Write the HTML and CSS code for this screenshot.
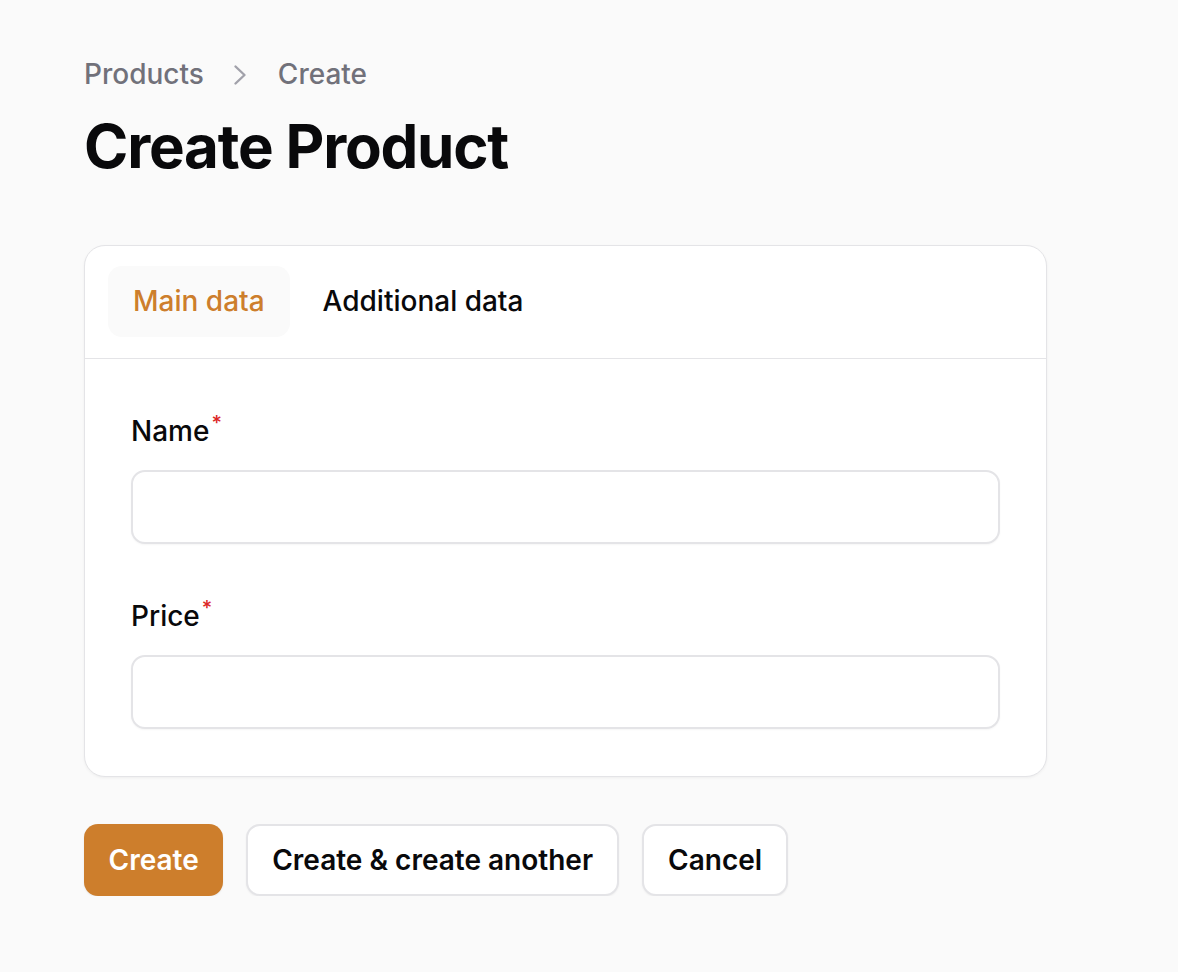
FILE: index.html
```html
<!DOCTYPE html>
<html lang="en">
<head>
<meta charset="utf-8">
<title>Create Product</title>
<link rel="stylesheet" href="styles.css">
</head>
<body>
<main class="page">
  <nav class="breadcrumbs">
    <span class="crumb">Products</span>
    <svg class="chev" width="14" height="22" viewBox="0 0 14 22" fill="none" stroke="currentColor" stroke-width="2.4" stroke-linecap="round" stroke-linejoin="round"><path d="M2.5 2.5l9 8.5-9 8.5"/></svg>
    <span class="crumb">Create</span>
  </nav>
  <h1 class="title">Create Product</h1>

  <section class="card">
    <div class="tabs">
      <button class="tab active">Main data</button>
      <button class="tab">Additional data</button>
    </div>
    <div class="panel">
      <div class="field">
        <label class="label">Name<sup class="req">*</sup></label>
        <input class="input" type="text">
      </div>
      <div class="field">
        <label class="label">Price<sup class="req">*</sup></label>
        <input class="input" type="text">
      </div>
    </div>
  </section>

  <div class="actions">
    <button class="btn primary">Create</button>
    <button class="btn outline">Create &amp; create another</button>
    <button class="btn outline">Cancel</button>
  </div>
</main>
</body>
</html>
```

FILE: styles.css
```css
html, body {
  margin: 0;
  background: #fafafa;
  font-family: Inter, "Noto Sans", sans-serif;
  color: #09090b;
}
.page {
  padding: 57px 0 0 84px;
  width: 963px;
}
.breadcrumbs {
  display: flex;
  align-items: center;
  height: 35px;
  font-size: 28px;
  line-height: 35px;
  font-weight: 500;
  color: #71717a;
}
.chev {
  color: #a1a1aa;
  margin: 0 31px 0 29px;
}
.title {
  margin: 19px 0 0;
  font-size: 60px;
  line-height: 70px;
  font-weight: 700;
  letter-spacing: -0.02em;
  color: #09090b;
}
.card {
  margin-top: 64px;
  background: #fff;
  border: 1px solid #e4e4e7;
  border-radius: 21px;
  box-shadow: 0 1px 3px rgba(0,0,0,0.05);
}
.tabs {
  display: flex;
  gap: 8px;
  padding: 20px 23px 21px;
  border-bottom: 1px solid #e4e4e7;
}
.tab {
  font: inherit;
  font-size: 28px;
  font-weight: 500;
  line-height: 35px;
  padding: 18px 25px;
  border: 0;
  border-radius: 14px;
  background: transparent;
  color: #09090b;
}
.tab.active {
  background: #fafafa;
  color: #cd7e2c;
}
.panel {
  padding: 55px 46px 47px;
  display: flex;
  flex-direction: column;
  gap: 55px;
}
.field {
  display: flex;
  flex-direction: column;
  gap: 21px;
}
.label {
  font-size: 28px;
  line-height: 35px;
  font-weight: 500;
  color: #09090b;
}
.req {
  color: #dc2626;
  font-size: 20px;
  line-height: 0;
  vertical-align: 0;
  position: relative;
  top: -11px;
  margin-left: 2px;
}
.input {
  box-sizing: border-box;
  height: 74px;
  width: 100%;
  border: 2px solid #e4e4e7;
  border-radius: 14px;
  background: #fff;
  font: inherit;
  font-size: 28px;
  padding: 0 21px;
  box-shadow: 0 1px 2px rgba(0,0,0,0.04);
  outline: none;
}
.actions {
  display: flex;
  gap: 23px;
  margin-top: 47px;
}
.btn {
  font: inherit;
  font-size: 28px;
  font-weight: 600;
  height: 72px;
  padding: 0 24px;
  border-radius: 14px;
  box-sizing: border-box;
  cursor: pointer;
}
.btn.primary {
  background: #cd7e2c;
  color: #fff;
  border: 0;
  padding: 0 24.5px;
  box-shadow: 0 1px 2px rgba(0,0,0,0.08);
}
.btn.outline {
  background: #fff;
  color: #09090b;
  border: 2px solid #e4e4e7;
  box-shadow: 0 1px 2px rgba(0,0,0,0.05);
}
```
